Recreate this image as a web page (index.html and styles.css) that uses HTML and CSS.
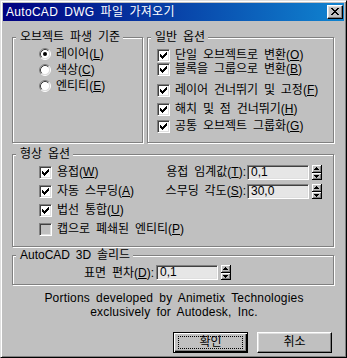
FILE: index.html
```html
<!DOCTYPE html>
<html lang="ko">
<head>
<meta charset="utf-8">
<title>AutoCAD DWG 파일 가져오기</title>
<link rel="stylesheet" href="styles.css">
</head>
<body>
<div class="win">
  <div class="titlebar">
    <span class="title"><span class="lat">AutoCAD DWG</span> 파일 가져오기</span>
    <span class="close-btn">
      <svg width="14" height="12" viewBox="0 0 14 12" shape-rendering="crispEdges"><path fill="#000" d="M3 2h2v1h-2z M9 2h2v1h-2z M4 3h2v1h-2z M8 3h2v1h-2z M5 4h4v1h-4z M6 5h2v1h-2z M5 6h4v1h-4z M4 7h2v1h-2z M8 7h2v1h-2z M3 8h2v1h-2z M9 8h2v1h-2z"/></svg>
    </span>
  </div>
  <div class="body">
    <div class="top-row">
      <div class="group g-derive">
        <div class="legend">오브젝트 파생 기준</div>
        <div class="radio-list">
          <div class="row">
            <svg class="radio" width="12" height="12" viewBox="0 0 12 12"><circle cx="6" cy="6" r="4.5" fill="#fff"/><path d="M2.11 9.89A5.5 5.5 0 0 1 9.89 2.11" fill="none" stroke="#808080"/><path d="M9.89 2.11A5.5 5.5 0 0 1 2.11 9.89" fill="none" stroke="#fff"/><path d="M2.82 9.18A4.5 4.5 0 0 1 9.18 2.82" fill="none" stroke="#404040"/><path d="M9.18 2.82A4.5 4.5 0 0 1 2.82 9.18" fill="none" stroke="#dfdfdf"/><circle cx="6" cy="6" r="2" fill="#000"/></svg>
            <span>레이어<span class="key">(<u>L</u>)</span></span>
          </div>
          <div class="row">
            <svg class="radio" width="12" height="12" viewBox="0 0 12 12"><circle cx="6" cy="6" r="4.5" fill="#fff"/><path d="M2.11 9.89A5.5 5.5 0 0 1 9.89 2.11" fill="none" stroke="#808080"/><path d="M9.89 2.11A5.5 5.5 0 0 1 2.11 9.89" fill="none" stroke="#fff"/><path d="M2.82 9.18A4.5 4.5 0 0 1 9.18 2.82" fill="none" stroke="#404040"/><path d="M9.18 2.82A4.5 4.5 0 0 1 2.82 9.18" fill="none" stroke="#dfdfdf"/></svg>
            <span>색상<span class="key">(<u>C</u>)</span></span>
          </div>
          <div class="row">
            <svg class="radio" width="12" height="12" viewBox="0 0 12 12"><circle cx="6" cy="6" r="4.5" fill="#fff"/><path d="M2.11 9.89A5.5 5.5 0 0 1 9.89 2.11" fill="none" stroke="#808080"/><path d="M9.89 2.11A5.5 5.5 0 0 1 2.11 9.89" fill="none" stroke="#fff"/><path d="M2.82 9.18A4.5 4.5 0 0 1 9.18 2.82" fill="none" stroke="#404040"/><path d="M9.18 2.82A4.5 4.5 0 0 1 2.82 9.18" fill="none" stroke="#dfdfdf"/></svg>
            <span>엔티티<span class="key">(<u>E</u>)</span></span>
          </div>
        </div>
      </div>
      <div class="group g-general">
        <div class="legend">일반 옵션</div>
        <div class="check-list">
          <div class="row r1"><span class="cb"><svg width="11" height="11" viewBox="1 1 11 11" shape-rendering="crispEdges"><path d="M3 5h1v3h-1z M4 6h1v3h-1z M5 7h1v3h-1z M6 6h1v3h-1z M7 5h1v3h-1z M8 4h1v3h-1z M9 3h1v3h-1z"/></svg></span><span>단일 오브젝트로 변환<span class="key">(<u>O</u>)</span></span></div>
          <div class="row r2"><span class="cb"><svg width="11" height="11" viewBox="1 1 11 11" shape-rendering="crispEdges"><path d="M3 5h1v3h-1z M4 6h1v3h-1z M5 7h1v3h-1z M6 6h1v3h-1z M7 5h1v3h-1z M8 4h1v3h-1z M9 3h1v3h-1z"/></svg></span><span>블록을 그룹으로 변환<span class="key">(<u>B</u>)</span></span></div>
          <div class="row r3"><span class="cb"><svg width="11" height="11" viewBox="1 1 11 11" shape-rendering="crispEdges"><path d="M3 5h1v3h-1z M4 6h1v3h-1z M5 7h1v3h-1z M6 6h1v3h-1z M7 5h1v3h-1z M8 4h1v3h-1z M9 3h1v3h-1z"/></svg></span><span>레이어 건너뛰기 및 고정<span class="key">(<u>F</u>)</span></span></div>
          <div class="row r4"><span class="cb"><svg width="11" height="11" viewBox="1 1 11 11" shape-rendering="crispEdges"><path d="M3 5h1v3h-1z M4 6h1v3h-1z M5 7h1v3h-1z M6 6h1v3h-1z M7 5h1v3h-1z M8 4h1v3h-1z M9 3h1v3h-1z"/></svg></span><span>해치 및 점 건너뛰기<span class="key">(<u>H</u>)</span></span></div>
          <div class="row r5"><span class="cb"><svg width="11" height="11" viewBox="1 1 11 11" shape-rendering="crispEdges"><path d="M3 5h1v3h-1z M4 6h1v3h-1z M5 7h1v3h-1z M6 6h1v3h-1z M7 5h1v3h-1z M8 4h1v3h-1z M9 3h1v3h-1z"/></svg></span><span>공통 오브젝트 그룹화<span class="key">(<u>G</u>)</span></span></div>
        </div>
      </div>
    </div>

    <div class="group g-geom">
      <div class="legend">형상 옵션</div>
      <div class="geom-grid">
        <div class="row"><span class="cb"><svg width="11" height="11" viewBox="1 1 11 11" shape-rendering="crispEdges"><path d="M3 5h1v3h-1z M4 6h1v3h-1z M5 7h1v3h-1z M6 6h1v3h-1z M7 5h1v3h-1z M8 4h1v3h-1z M9 3h1v3h-1z"/></svg></span><span>용접<span class="key">(<u>W</u>)</span></span></div>
        <div class="row field-row">
          <span class="flabel">용접 임계값<span class="key">(<u>T</u>):</span></span>
          <span class="field">0,1</span>
          <svg class="spin" width="10" height="15" viewBox="0 0 10 15" shape-rendering="crispEdges"><rect width="10" height="15" fill="#c0c0c0"/><path fill="#fff" d="M0 0h9v1h-9z M0 0h1v7h-1z M0 8h9v1h-9z M0 8h1v6h-1z"/><path fill="#808080" d="M1 6h8v1h-8z M8 1h1v6h-1z M1 13h8v1h-8z M8 9h1v5h-1z"/><path fill="#000" d="M9 0h1v15h-1z M0 7h10v1h-10z M0 14h10v1h-10z M4 2h1v1h-1z M3 3h3v1h-3z M2 4h5v1h-5z M2 10h5v1h-5z M3 11h3v1h-3z M4 12h1v1h-1z"/></svg>
        </div>
        <div class="row"><span class="cb"><svg width="11" height="11" viewBox="1 1 11 11" shape-rendering="crispEdges"><path d="M3 5h1v3h-1z M4 6h1v3h-1z M5 7h1v3h-1z M6 6h1v3h-1z M7 5h1v3h-1z M8 4h1v3h-1z M9 3h1v3h-1z"/></svg></span><span>자동 스무딩<span class="key">(<u>A</u>)</span></span></div>
        <div class="row field-row">
          <span class="flabel">스무딩 각도<span class="key">(<u>S</u>):</span></span>
          <span class="field">30,0</span>
          <svg class="spin" width="10" height="15" viewBox="0 0 10 15" shape-rendering="crispEdges"><rect width="10" height="15" fill="#c0c0c0"/><path fill="#fff" d="M0 0h9v1h-9z M0 0h1v7h-1z M0 8h9v1h-9z M0 8h1v6h-1z"/><path fill="#808080" d="M1 6h8v1h-8z M8 1h1v6h-1z M1 13h8v1h-8z M8 9h1v5h-1z"/><path fill="#000" d="M9 0h1v15h-1z M0 7h10v1h-10z M0 14h10v1h-10z M4 2h1v1h-1z M3 3h3v1h-3z M2 4h5v1h-5z M2 10h5v1h-5z M3 11h3v1h-3z M4 12h1v1h-1z"/></svg>
        </div>
        <div class="row wide"><span class="cb"><svg width="11" height="11" viewBox="1 1 11 11" shape-rendering="crispEdges"><path d="M3 5h1v3h-1z M4 6h1v3h-1z M5 7h1v3h-1z M6 6h1v3h-1z M7 5h1v3h-1z M8 4h1v3h-1z M9 3h1v3h-1z"/></svg></span><span>법선 통합<span class="key">(<u>U</u>)</span></span></div>
        <div class="row wide"><span class="cb off"></span><span>캡으로 폐쇄된 엔티티<span class="key">(<u>P</u>)</span></span></div>
      </div>
    </div>

    <div class="group g-solid">
      <div class="legend"><span class="lat">AutoCAD 3D</span> 솔리드</div>
      <div class="solid-row">
        <span class="slabel">표면 편차<span class="key">(<u>D</u>):</span></span>
        <span class="field">0,1</span>
        <svg class="spin" width="10" height="15" viewBox="0 0 10 15" shape-rendering="crispEdges"><rect width="10" height="15" fill="#c0c0c0"/><path fill="#fff" d="M0 0h9v1h-9z M0 0h1v7h-1z M0 8h9v1h-9z M0 8h1v6h-1z"/><path fill="#808080" d="M1 6h8v1h-8z M8 1h1v6h-1z M1 13h8v1h-8z M8 9h1v5h-1z"/><path fill="#000" d="M9 0h1v15h-1z M0 7h10v1h-10z M0 14h10v1h-10z M4 2h1v1h-1z M3 3h3v1h-3z M2 4h5v1h-5z M2 10h5v1h-5z M3 11h3v1h-3z M4 12h1v1h-1z"/></svg>
      </div>
    </div>

    <p class="credit">Portions developed by Animetix Technologies<br>exclusively for Autodesk, Inc.</p>

    <div class="buttons">
      <span class="btn default"><span class="focus">확인</span></span>
      <span class="btn">취소</span>
    </div>
  </div>
</div>
</body>
</html>
```

FILE: styles.css
```css
html, body {
  margin: 0;
  padding: 0;
  background: #c0c0c0;
}

body {
  font-family: "Liberation Sans", "Noto Sans CJK KR", sans-serif;
  font-size: 12px;
  word-spacing: 2.5px;
  color: #000;
}

u {
  text-decoration: underline;
  text-underline-offset: 1px;
}

.win {
  box-sizing: border-box;
  width: 347px;
  height: 358px;
  background: #c0c0c0;
  border-top: 1px solid #dfdfdf;
  border-left: 1px solid #dfdfdf;
  border-right: 1px solid #000;
  border-bottom: 1px solid #000;
  box-shadow: inset 1px 1px #fff, inset -1px -1px #808080;
  padding: 2px;
  display: flex;
  flex-direction: column;
}

.titlebar {
  height: 18px;
  flex: none;
  display: flex;
  align-items: center;
  padding-left: 3px;
  padding-right: 1px;
  background: linear-gradient(to right, #000080, #1084d0);
  color: #fff;
}

.title {
  line-height: 14px;
  letter-spacing: 0.3px;
  white-space: nowrap;
}

.close-btn {
  margin-left: auto;
  box-sizing: border-box;
  width: 16px;
  height: 14px;
  background: #c0c0c0;
  border-style: solid;
  border-width: 1px;
  border-color: #fff #000 #000 #fff;
  box-shadow: inset -1px -1px #808080, inset 1px 1px #dfdfdf;
  display: flex;
}

.close-btn svg {
  display: block;
}

.body {
  flex: 1;
  padding: 16px 8px 0 9px;
  display: flex;
  flex-direction: column;
}

.top-row {
  display: flex;
  gap: 4px;
}

.group {
  box-sizing: border-box;
  border: 1px solid #808080;
  box-shadow: inset 1px 1px #fff, 1px 1px #fff;
}

.legend {
  display: table;
  height: 14px;
  line-height: 14px;
  margin: -8px 0 0 3px;
  padding: 0 3px 0 4px;
  background: #c0c0c0;
  white-space: nowrap;
}

.row {
  display: flex;
  align-items: center;
  height: 14px;
  line-height: 14px;
  white-space: nowrap;
}

/* group 1 */
.g-derive {
  width: 131px;
  height: 106px;
}

.radio-list {
  display: flex;
  flex-direction: column;
  gap: 2px;
  margin-top: 3px;
  padding-left: 26px;
}

.radio {
  display: block;
  flex: none;
  margin-right: 5px;
}

/* group 2 */
.g-general {
  width: 187px;
  height: 106px;
}

.check-list {
  display: flex;
  flex-direction: column;
  padding-left: 9px;
}

.check-list .r1 { margin-top: 4px; }
.check-list .r3 { margin-top: 7px; }
.check-list .r4 { margin-top: 5px; }
.check-list .r5 { margin-top: 3px; }

.cb {
  box-sizing: border-box;
  flex: none;
  width: 13px;
  height: 13px;
  margin-right: 5px;
  background: #fff;
  border-style: solid;
  border-width: 1px;
  border-color: #808080 #fff #fff #808080;
  box-shadow: inset 1px 1px #404040, inset -1px -1px #dfdfdf;
  display: flex;
}

.cb svg {
  display: block;
  fill: #000;
}

.cb.off {
  background: #c0c0c0;
}

/* group 3 */
.g-geom {
  width: 322px;
  height: 93px;
  margin-top: 11px;
}

.geom-grid {
  display: grid;
  grid-template-columns: 117px auto;
  grid-auto-rows: 14px;
  row-gap: 5px;
  margin-top: 4px;
  padding-left: 26px;
}

.geom-grid .wide {
  grid-column: 1 / span 2;
}

.flabel {
  width: 90px;
  text-align: right;
  flex: none;
}

.field {
  box-sizing: border-box;
  display: block;
  flex: none;
  width: 62px;
  height: 15px;
  margin-left: 1px;
  padding-left: 3px;
  line-height: 13px;
  background: #e6e6e6;
  border-style: solid;
  border-width: 1px;
  border-color: #808080 #fff #fff #808080;
  box-shadow: inset 1px 1px #404040, inset -1px -1px #dfdfdf;
}

.spin {
  display: block;
  flex: none;
  margin-left: 3px;
}

/* group 4 */
.g-solid {
  width: 322px;
  height: 30px;
  margin-top: 8px;
}

.solid-row {
  display: flex;
  align-items: center;
  height: 15px;
  margin-top: 3px;
}

.slabel {
  width: 141px;
  text-align: right;
  flex: none;
  line-height: 14px;
}

.solid-row .field {
  margin-left: 2px;
}

/* credit */
.credit {
  margin: 6px 0 0;
  line-height: 14px;
  letter-spacing: 0.2px;
  text-align: center;
}

/* buttons */
.buttons {
  display: flex;
  justify-content: flex-end;
  gap: 9px;
  margin-top: 13px;
  padding-right: 4px;
}

.btn {
  box-sizing: border-box;
  width: 75px;
  height: 21px;
  background: #c0c0c0;
  border-style: solid;
  border-width: 1px;
  border-color: #fff #000 #000 #fff;
  box-shadow: inset -1px -1px #808080, inset 1px 1px #dfdfdf;
  display: flex;
  align-items: center;
  justify-content: center;
  line-height: 13px;
}

.btn.default {
  border-color: #000;
  box-shadow: inset 1px 1px #fff, inset -1px -1px #000, inset -2px -2px #808080;
}

.focus {
  box-sizing: border-box;
  width: 65px;
  height: 13px;
  border: 1px dotted #000;
  display: flex;
  align-items: center;
  justify-content: center;
}
```
